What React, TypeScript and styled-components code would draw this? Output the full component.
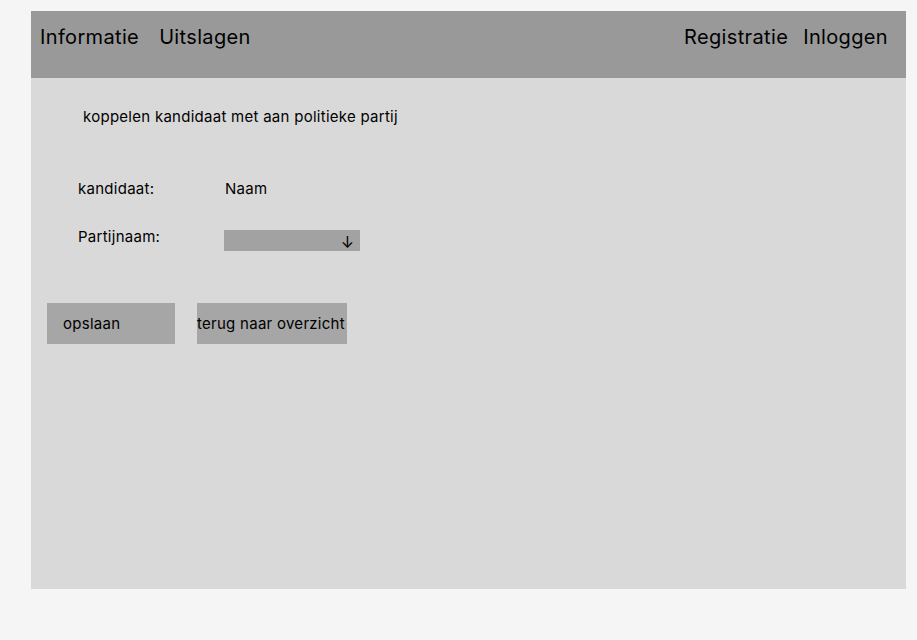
import React from "react";
import styled, { createGlobalStyle } from "styled-components";

const Global = createGlobalStyle`
  html, body { margin: 0; padding: 0; background: #f5f5f5; }
  body { font-family: Inter, "Noto Sans", sans-serif; color: #000; }
`;

const Page = styled.div`
  padding: 11px 0 0 31px;
`;

const Frame = styled.div`
  width: 875px;
  height: 578px;
  background: #d9d9d9;
  display: flex;
  flex-direction: column;
`;

const Header = styled.header`
  height: 67px;
  background: #999999;
  display: flex;
  align-items: flex-start;
  justify-content: space-between;
  padding: 0 18px 0 9px;
`;

const NavGroup = styled.nav<{ $gap: number }>`
  display: flex;
  gap: ${(p) => p.$gap}px;
  padding-top: 13px;
`;

const NavLink = styled.span`
  font-size: 20px;
  line-height: 26px;
  font-weight: 400;
  letter-spacing: 0.35px;
`;

const Content = styled.main`
  display: flex;
  flex-direction: column;
  padding: 29px 0 0 16px;
`;

const Title = styled.h1`
  margin: 0 0 0 36px;
  font-size: 15px;
  line-height: 20px;
  font-weight: 400;
  letter-spacing: 0.27px;
`;

const Form = styled.div`
  display: grid;
  grid-template-columns: 147px auto;
  row-gap: 28px;
  margin: 52px 0 0 31px;
  align-items: start;
`;

const Label = styled.span`
  font-size: 15px;
  line-height: 20px;
  letter-spacing: 0.27px;
`;

const Value = styled.span`
  font-size: 15px;
  line-height: 20px;
  letter-spacing: 0.27px;
`;

const Select = styled.div`
  width: 136px;
  height: 21px;
  margin-top: 3px;
  margin-left: -1px;
  background: #a2a2a2;
  display: flex;
  justify-content: flex-end;
  align-items: center;
  padding-right: 6px;
  box-sizing: border-box;
  font-size: 16px;
  line-height: 20px;
  padding-top: 3px;
`;

const Actions = styled.div`
  display: flex;
  gap: 22px;
  margin-top: 52px;
`;

const Button = styled.button<{ $pad: number; $w: number }>`
  width: ${(p) => p.$w}px;
  height: 41px;
  border: none;
  background: #a6a6a6;
  font-family: Inter, "Noto Sans", sans-serif;
  font-size: 15px;
  letter-spacing: 0.27px;
  color: #000;
  text-align: left;
  padding: 0 0 0 ${(p) => p.$pad}px;
  white-space: nowrap;
`;

export default function App() {
  return (
    <>
      <Global />
      <Page>
        <Frame>
          <Header>
            <NavGroup $gap={20}>
              <NavLink>Informatie</NavLink>
              <NavLink>Uitslagen</NavLink>
            </NavGroup>
            <NavGroup $gap={15}>
              <NavLink>Registratie</NavLink>
              <NavLink>Inloggen</NavLink>
            </NavGroup>
          </Header>
          <Content>
            <Title>koppelen kandidaat met aan politieke partij</Title>
            <Form>
              <Label>kandidaat:</Label>
              <Value>Naam</Value>
              <Label>Partijnaam:</Label>
              <Select>↓</Select>
            </Form>
            <Actions>
              <Button $pad={16} $w={128}>opslaan</Button>
              <Button $pad={0} $w={150}>terug naar overzicht</Button>
            </Actions>
          </Content>
        </Frame>
      </Page>
    </>
  );
}
